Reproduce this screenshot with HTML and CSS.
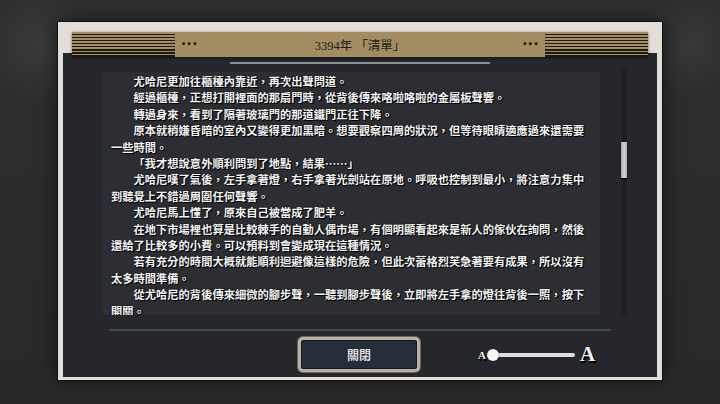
FILE: index.html
```html
<!DOCTYPE html>
<html lang="zh-Hant">
<head>
  <meta charset="UTF-8" />
  <title>清單</title>
  <link rel="stylesheet" href="styles.css">
</head>
<body>
  <div class="frame">
    <div class="header">
      <div class="stripes"></div>
      <span class="dots">•••</span>
      <div class="title">3394年 「清單」</div>
      <span class="dots">•••</span>
      <div class="stripes"></div>
    </div>

    <div class="panel">
      <div class="top-line"></div>

      <div class="log-row">
        <div class="log-box">
          <p class="para">尤哈尼更加往櫃檯內靠近，再次出聲問道。</p>
          <p class="para">經過櫃檯，正想打開裡面的那扇門時，從背後傳來咯啦咯啦的金屬板聲響。</p>
          <p class="para">轉過身來，看到了隔著玻璃門的那道鐵門正往下降。</p>
          <p class="para">原本就稍嫌昏暗的室內又變得更加黑暗。想要觀察四周的狀況，但等待眼睛適應過來還需要一些時間。</p>
          <p class="para">「我才想說意外順利問到了地點，結果……」</p>
          <p class="para">尤哈尼嘆了氣後，左手拿著燈，右手拿著光劍站在原地。呼吸也控制到最小，將注意力集中到聽覺上不錯過周圍任何聲響。</p>
          <p class="para">尤哈尼馬上懂了，原來自己被當成了肥羊。</p>
          <p class="para">在地下市場裡也算是比較棘手的自動人偶市場，有個明顯看起來是新人的傢伙在詢問，然後還給了比較多的小費。可以預料到會變成現在這種情況。</p>
          <p class="para">若有充分的時間大概就能順利迴避像這樣的危險，但此次蕾格烈芙急著要有成果，所以沒有太多時間準備。</p>
          <p class="para">從尤哈尼的背後傳來細微的腳步聲，一聽到腳步聲後，立即將左手拿的燈往背後一照，按下開關。</p>
        </div>
        <div class="scroll-track">
          <div class="scroll-thumb"></div>
        </div>
      </div>

      <div class="separator"></div>

      <div class="controls">
        <div></div>
        <button class="close-btn">關閉</button>
        <div class="font-size">
          <span class="a-small">A</span>
          <div class="slider">
            <span class="knob"></span>
          </div>
          <span class="a-big">A</span>
        </div>
      </div>
    </div>
  </div>
</body>
</html>
```

FILE: styles.css
```css
html, body {
  margin: 0;
  padding: 0;
  height: 100%;
}

body {
  background-color: #2b2b2b;
  background-image:
    radial-gradient(circle at 40px 45px, rgba(255, 255, 255, 0.06), transparent 60px),
    radial-gradient(circle at 690px 45px, rgba(255, 255, 255, 0.05), transparent 50px),
    linear-gradient(#2e2e2e, #292929);
  font-family: "Noto Sans CJK TC", "Liberation Serif", serif;
  padding-top: 22px;
  box-sizing: border-box;
}

.frame {
  width: 604px;
  margin: 0 auto;
  box-sizing: border-box;
  background: #e4ded8;
  padding: 10px 5px 3px;
  outline: 1px solid #111;
  box-shadow: 0 0 18px rgba(0, 0, 0, 0.6);
}

/* header */
.header {
  position: relative;
  z-index: 1;
  height: 25px;
  margin: 0 9px;
  background: #a38b62;
  display: flex;
  align-items: center;
  box-shadow: 0 1px 3px rgba(0, 0, 0, 0.5);
}
.stripes {
  width: 103px;
  height: 100%;
  background: repeating-linear-gradient(#a38b62 0 1.6px, #1c1812 1.6px 3.1px);
}
.dots {
  font-family: "DejaVu Sans", sans-serif;
  font-size: 8px;
  font-weight: 700;
  letter-spacing: 0.5px;
  color: #1f1a13;
  margin: 0 6px;
}
.title {
  flex: 1;
  text-align: center;
  font-family: "Liberation Serif", "Noto Sans CJK TC", serif;
  font-size: 12.5px;
  color: #231e17;
}

/* panel */
.panel {
  margin-top: -4px;
  background: #26272c;
  padding: 9px 0 5px;
}
.top-line {
  width: 260px;
  height: 2px;
  margin: 0 auto;
  background: #8c8d90;
}

.log-row {
  display: flex;
  margin-top: 8px;
  padding-left: 40px;
}
.log-box {
  width: 497px;
  height: 243px;
  box-sizing: border-box;
  padding: 1px 0 0 8px;
  overflow: hidden;
  background: #2d2e33;
  color: #f4f4f4;
  font-size: 11.28px;
  font-weight: 700;
  line-height: 16.4px;
  text-shadow: 1px 1px 0 #000, 0 0 2px #000;
}
.para {
  margin: 0;
  width: 42em;
  text-indent: 2em;
}

.scroll-track {
  width: 6px;
  height: 245px;
  margin-left: 21px;
  margin-top: -2px;
  background: linear-gradient(90deg, #232428, #1b1c1f, #232428);
}
.scroll-thumb {
  width: 6px;
  height: 36px;
  margin-top: 72px;
  background: linear-gradient(90deg, #a9a9ab, #d4d4d6, #b2b2b4);
  box-shadow: 0 1px 1px #000;
}

.separator {
  width: 502px;
  height: 2px;
  margin: 14px auto 0;
  background: #454a51;
}

/* bottom controls */
.controls {
  display: grid;
  grid-template-columns: 1fr auto 1fr;
  align-items: center;
  margin-top: 6px;
}
.close-btn {
  width: 122px;
  height: 35px;
  margin-left: -2px;
  border: 3px solid #b9b2a4;
  border-radius: 5px;
  background: #252c3a;
  box-shadow: inset 0 0 0 1px #151820, 0 0 0 1px #6d685f;
  color: #dcdcdc;
  font-family: "Noto Sans CJK TC", sans-serif;
  font-size: 12px;
  font-weight: 700;
  cursor: pointer;
}

.font-size {
  display: flex;
  align-items: center;
  padding-left: 58px;
}
.a-small, .a-big {
  font-family: "Liberation Serif", serif;
  font-weight: 700;
  color: #f2f2f2;
  text-shadow: 1px 1px 0 #000, 1px 2px 1px #000;
}
.a-small {
  font-size: 11px;
}
.a-big {
  font-size: 21px;
  margin-left: 5px;
}
.slider {
  display: flex;
  align-items: center;
  width: 88px;
  height: 4px;
  margin-left: 1px;
  background: #dedede;
  border-radius: 2px;
}
.knob {
  width: 12px;
  height: 12px;
  border-radius: 50%;
  background: #f4f4f4;
  box-shadow: 0 0 1px #000;
}
```
